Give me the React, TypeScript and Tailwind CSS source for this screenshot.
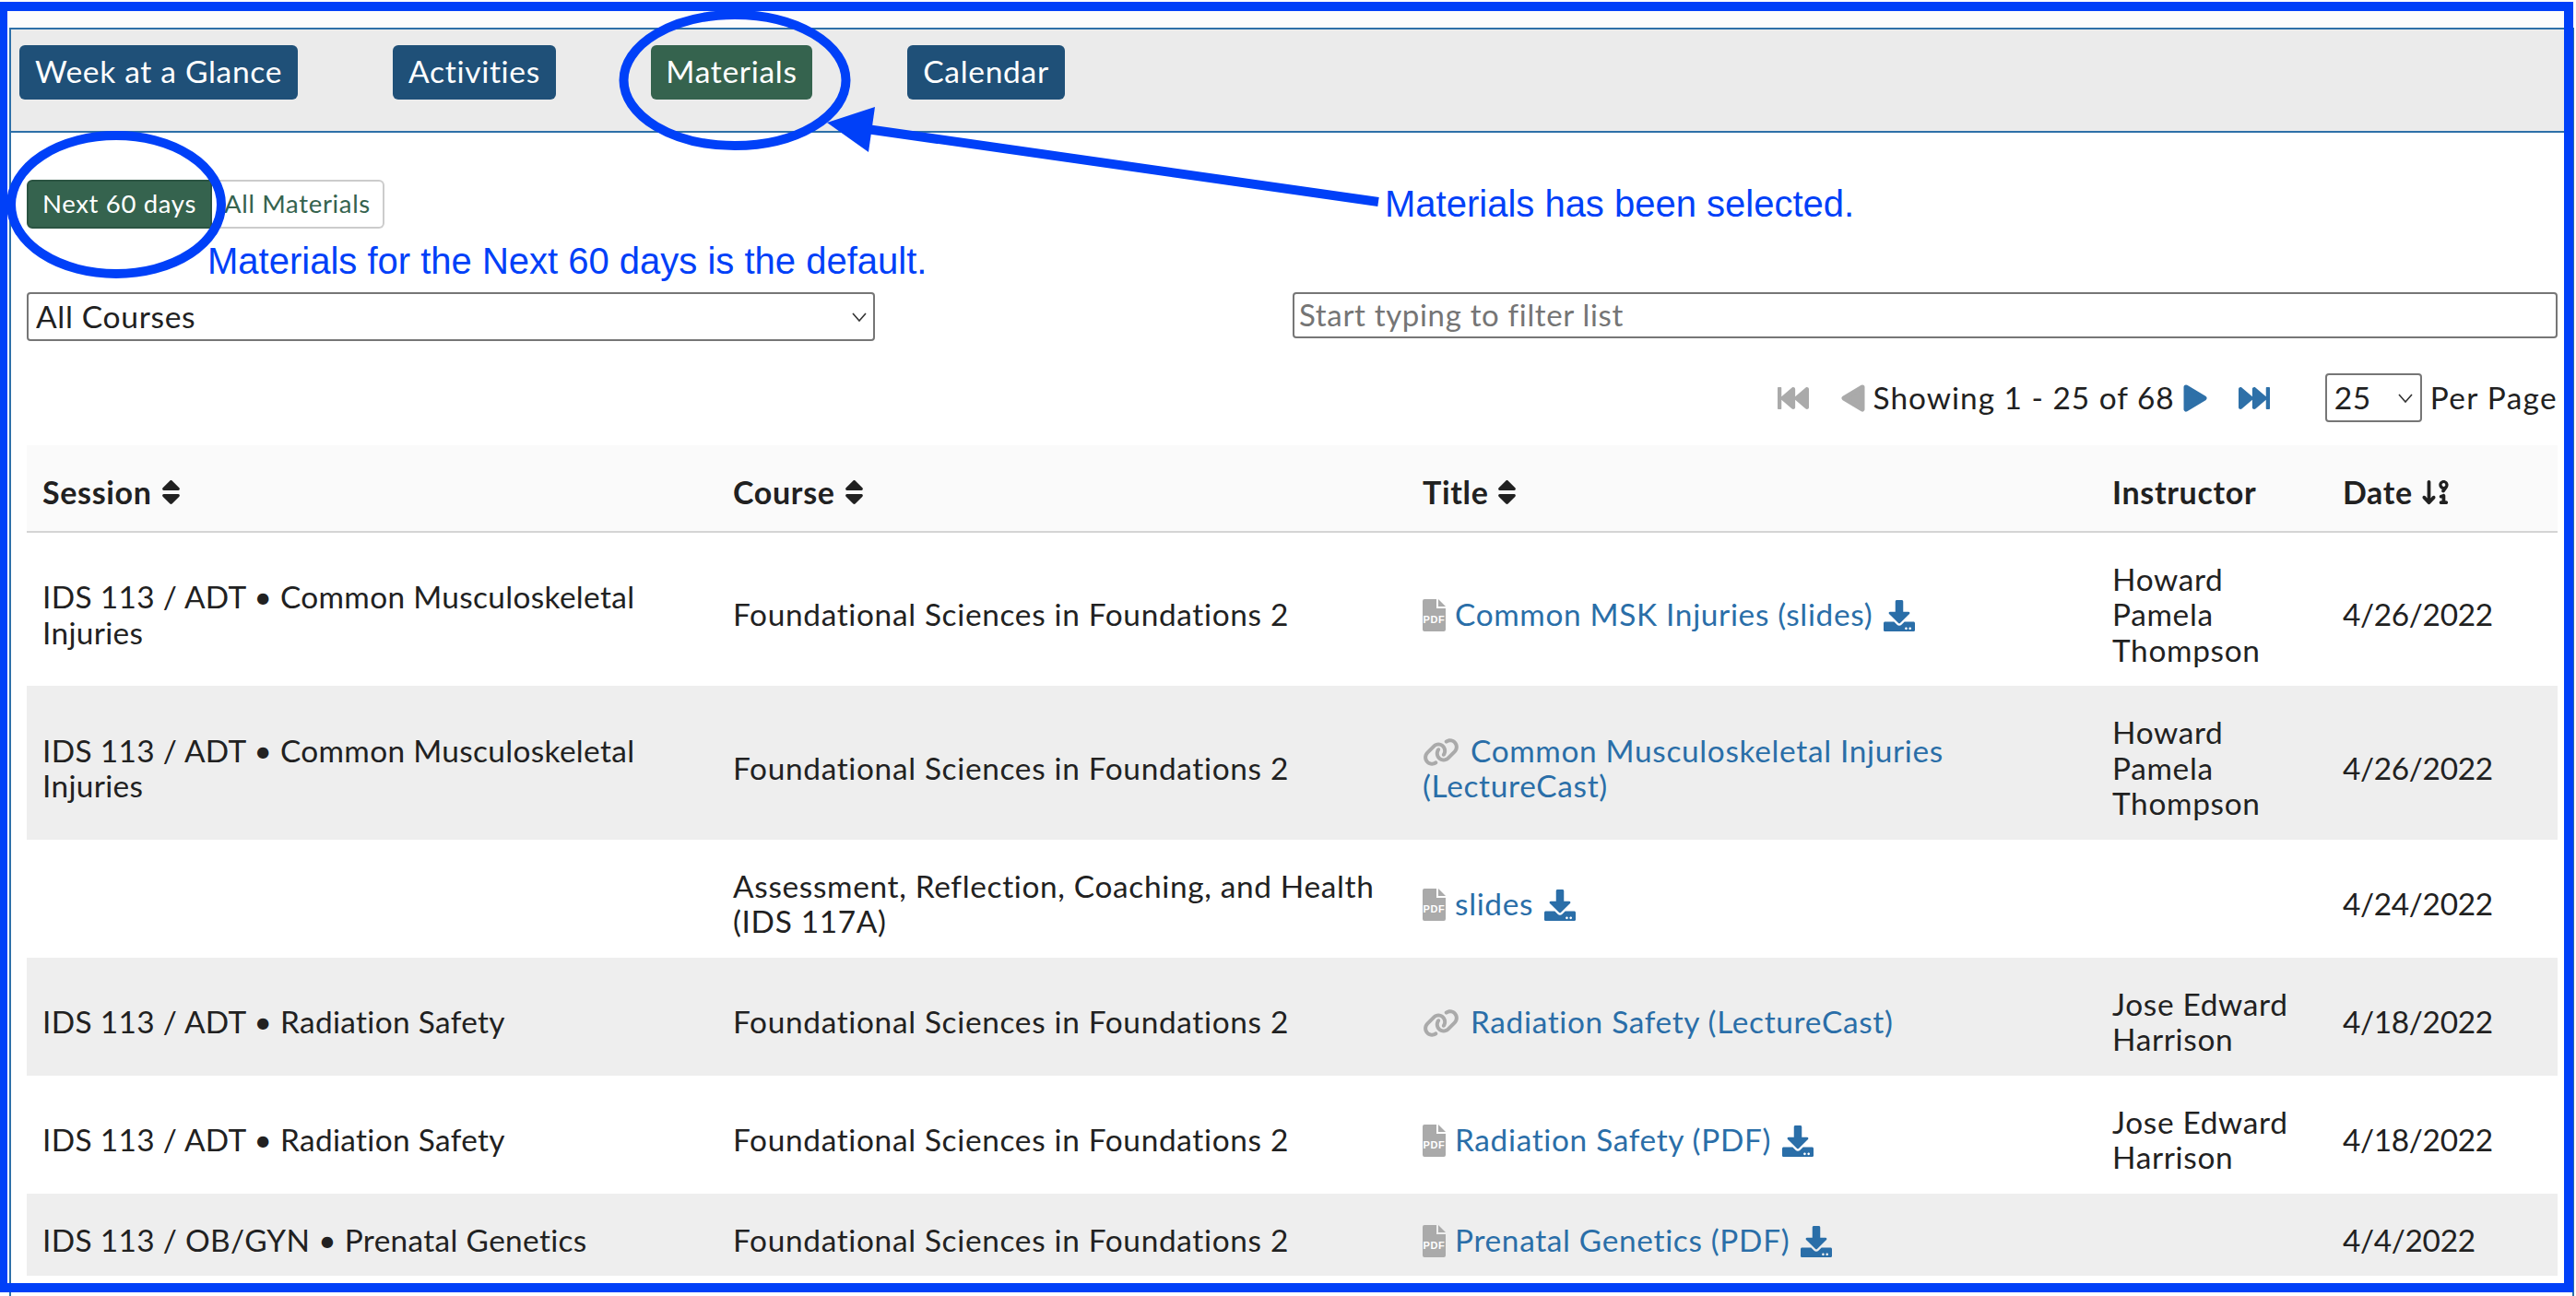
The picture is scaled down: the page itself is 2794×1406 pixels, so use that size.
import { FaDownload, FaFastBackward, FaFastForward, FaSort } from "react-icons/fa";
import { FaArrowDown91, FaLink } from "react-icons/fa6";

type Row = {
  session: string;
  course: string;
  title: string;
  kind: "pdf" | "link";
  instructor: string[];
  date: string;
};

const rows: Row[] = [
  { session: "IDS 113 / ADT • Common Musculoskeletal Injuries", course: "Foundational Sciences in Foundations 2", title: "Common MSK Injuries (slides)", kind: "pdf", instructor: ["Howard", "Pamela", "Thompson"], date: "4/26/2022" },
  { session: "IDS 113 / ADT • Common Musculoskeletal Injuries", course: "Foundational Sciences in Foundations 2", title: "Common Musculoskeletal Injuries (LectureCast)", kind: "link", instructor: ["Howard", "Pamela", "Thompson"], date: "4/26/2022" },
  { session: "", course: "Assessment, Reflection, Coaching, and Health (IDS 117A)", title: "slides", kind: "pdf", instructor: [], date: "4/24/2022" },
  { session: "IDS 113 / ADT • Radiation Safety", course: "Foundational Sciences in Foundations 2", title: "Radiation Safety (LectureCast)", kind: "link", instructor: ["Jose Edward", "Harrison"], date: "4/18/2022" },
  { session: "IDS 113 / ADT • Radiation Safety", course: "Foundational Sciences in Foundations 2", title: "Radiation Safety (PDF)", kind: "pdf", instructor: ["Jose Edward", "Harrison"], date: "4/18/2022" },
  { session: "IDS 113 / OB/GYN • Prenatal Genetics", course: "Foundational Sciences in Foundations 2", title: "Prenatal Genetics (PDF)", kind: "pdf", instructor: [], date: "4/4/2022" },
];

function PdfIcon() {
  return (
    <svg viewBox="0 0 25 35" className="inline-block w-[25px] h-[35px] align-[-6px] mr-[10px]">
      <path d="M2 0h13v10h10v23a2 2 0 0 1-2 2H2a2 2 0 0 1-2-2V2a2 2 0 0 1 2-2z" fill="#aaaaaa" />
      <path d="M17 0l8 8h-8z" fill="#aaaaaa" />
      <text x="12.5" y="26" textAnchor="middle" fontSize="11" fontWeight="700" fill="#ffffff" fontFamily="Liberation Sans, sans-serif">PDF</text>
    </svg>
  );
}

function Caret({ dir, color }: { dir: "left" | "right"; color: string }) {
  return (
    <svg viewBox="0 0 26 30" className="w-[26px] h-[30px] shrink-0">
      <polygon
        points={dir === "left" ? "23,3 3,15 23,27" : "3,3 23,15 3,27"}
        fill={color}
        stroke={color}
        strokeWidth="5"
        strokeLinejoin="round"
      />
    </svg>
  );
}

function Chevron({ className }: { className: string }) {
  return (
    <svg viewBox="0 0 16 10" className={`absolute w-[16px] h-[10px] pointer-events-none ${className}`}>
      <path d="M1 1l7 8 7-8" fill="none" stroke="#333333" strokeWidth="1.6" />
    </svg>
  );
}

function NavButton({ label, width, active }: { label: string; width: string; active?: boolean }) {
  return (
    <button className={`h-[59px] pb-[2px] rounded-[6px] text-white text-[33.6px] leading-none ${width} ${active ? "bg-[#35634e]" : "bg-[#1f5078]"}`}>
      {label}
    </button>
  );
}

function SortHead({ label }: { label: string }) {
  return (
    <span className="inline-flex items-center gap-[10px]">
      {label}
      <FaSort className="w-[21px] h-[34px]" />
    </span>
  );
}

export default function App() {
  return (
    <div className="relative w-[2794px] h-[1406px] overflow-hidden bg-white font-[Lato,sans-serif] text-[33.4px] leading-[38.4px] text-[#212121] tracking-[0.02em]">
      <div className="h-[30px] bg-[#fcfcfc]" />

      <div className="ml-[10px] w-[2782px] min-h-[1376px] border-x-2 border-[#2e70a8]">
        <div className="h-[114px] bg-[#ebebeb] border-y-2 border-[#2e70a8] pl-[9px] pt-[17px] flex items-start gap-[103px]">
          <NavButton label="Week at a Glance" width="w-[302px]" />
          <NavButton label="Activities" width="w-[177px]" />
          <NavButton label="Materials" width="w-[175px]" active />
          <NavButton label="Calendar" width="w-[171px]" />
        </div>

        <div className="pl-[17px] pr-[16px] pt-[51px]">
          <div className="flex h-[53px] text-[27.5px]">
            <button className="w-[201px] bg-[#35634e] border-2 border-[#2b5442] text-white rounded-l-[6px]">Next 60 days</button>
            <button className="w-[187px] bg-white text-[#35634e] border-2 border-l-0 border-[#cccccc] rounded-r-[6px]">All Materials</button>
          </div>

          <div className="mt-[69px] flex justify-between items-start">
            <div className="relative">
              <select className="block appearance-none w-[920px] h-[53px] border-2 border-[#767676] rounded-[4px] bg-white pl-[8px] text-[33.6px]">
                <option>All Courses</option>
              </select>
              <Chevron className="right-[9px] top-[22px]" />
            </div>
            <input
              placeholder="Start typing to filter list"
              className="w-[1372px] h-[50px] border-2 border-[#767676] rounded-[4px] px-[5px] pb-[2px] text-[33px] placeholder:text-[#757575]"
            />
          </div>

          <div className="mt-[35px] h-[53px] flex items-center justify-end">
            <FaFastBackward preserveAspectRatio="none" className="w-[34px] h-[32px] text-[#aaaaaa] mr-[35px]" />
            <Caret dir="left" color="#aaaaaa" />
            <span className="mx-[9px] tracking-[0.03em]">Showing 1 - 25 of 68</span>
            <Caret dir="right" color="#2e70a8" />
            <FaFastForward preserveAspectRatio="none" className="w-[34px] h-[32px] text-[#2e70a8] ml-[34px] mr-[60px]" />
            <div className="relative">
              <select className="block appearance-none w-[105px] h-[53px] border-2 border-[#767676] rounded-[4px] bg-white pl-[8px] text-[33.6px]">
                <option>25</option>
              </select>
              <Chevron className="right-[10px] top-[22px]" />
            </div>
            <span className="ml-[9px] tracking-[0.04em]">Per Page</span>
          </div>

          <table className="mt-[25px] w-[2745px] table-fixed border-collapse">
            <colgroup>
              <col className="w-[749px]" />
              <col className="w-[748px]" />
              <col className="w-[748px]" />
              <col className="w-[250px]" />
              <col className="w-[250px]" />
            </colgroup>
            <thead>
              <tr className="bg-[#fafafa] h-[94px] border-b-2 border-[#d4d4d4] text-left font-bold text-[34px]">
                <th className="pl-[17px] pt-[9px]"><SortHead label="Session" /></th>
                <th className="pl-[17px] pt-[9px]"><SortHead label="Course" /></th>
                <th className="pl-[17px] pt-[9px]"><SortHead label="Title" /></th>
                <th className="pl-[17px] pt-[9px]">Instructor</th>
                <th className="pl-[17px] pt-[9px]">
                  <span className="inline-flex items-center gap-[8px]">
                    Date
                    <FaArrowDown91 className="w-[34px] h-[30px]" />
                  </span>
                </th>
              </tr>
            </thead>
            <tbody>
              {rows.map((row, index) => (
                <tr key={index} className={index % 2 === 1 ? "bg-[#eeeeee]" : "bg-white"}>
                  <td className="px-[17px] pt-[31px] pb-[20.2px] tracking-[0.01em]">{row.session}</td>
                  <td className="px-[17px] pt-[31px] pb-[20.2px]">{row.course}</td>
                  <td className="px-[17px] pt-[31px] pb-[20.2px] text-[#2a6ea8]">
                    {row.kind === "pdf" ? (
                      <PdfIcon />
                    ) : (
                      <FaLink className="inline-block w-[40px] h-[32px] text-[#aaaaaa] align-[-5px] mr-[12px]" />
                    )}
                    {row.title}
                    {row.kind === "pdf" && (
                      <FaDownload className="inline-block w-[34px] h-[34px] align-[-6px] ml-[12px]" />
                    )}
                  </td>
                  <td className="px-[17px] pt-[31px] pb-[20.2px]">
                    {row.instructor.map((name) => (
                      <div key={name}>{name}</div>
                    ))}
                  </td>
                  <td className="px-[17px] pt-[31px] pb-[20.2px] tracking-[-0.01em]">{row.date}</td>
                </tr>
              ))}
            </tbody>
          </table>
        </div>
      </div>

      {/* annotations drawn over the screenshot */}
      <div className="absolute left-0 top-[2px] w-[2791px] h-[1400px] border-t-[10px] border-b-[10px] border-l-[8px] border-r-[10px] border-[#0040f8] pointer-events-none" />
      <svg className="absolute inset-0 w-[2794px] h-[1406px] pointer-events-none" viewBox="0 0 2794 1406">
        <ellipse cx="797" cy="87" rx="120.5" ry="71" fill="none" stroke="#0040f8" strokeWidth="10" />
        <ellipse cx="126" cy="222" rx="114" ry="75" fill="none" stroke="#0040f8" strokeWidth="10" />
        <polygon points="897,133 949,116 942,165" fill="#0040f8" />
        <line x1="940" y1="140" x2="1495" y2="219" stroke="#0040f8" strokeWidth="10" />
      </svg>
      <div className="absolute left-[1502px] top-[198px] font-['Liberation_Sans',sans-serif] text-[40px] leading-[46px] tracking-normal text-[#0040f8]">
        Materials has been selected.
      </div>
      <div className="absolute left-[225px] top-[260px] font-['Liberation_Sans',sans-serif] text-[40px] leading-[46px] tracking-normal text-[#0040f8]">
        Materials for the Next 60 days is the default.
      </div>
    </div>
  );
}
